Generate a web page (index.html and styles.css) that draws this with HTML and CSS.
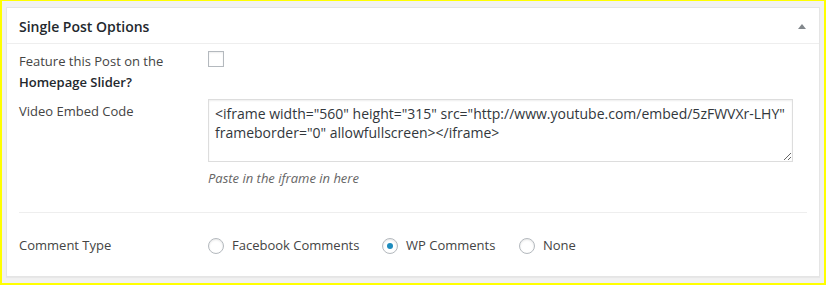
FILE: index.html
```html
<!DOCTYPE html>
<html>
<head>
<meta charset="utf-8">
<link rel="stylesheet" href="styles.css">
</head>
<body>
<div class="frame">
  <div class="postbox">
    <div class="postbox-header">
      <h2 class="postbox-title">Single Post Options</h2>
      <span class="toggle-arrow"></span>
    </div>
    <div class="postbox-inside">
      <div class="field-row row-feature">
        <div class="field-label">Feature this Post on the <strong>Homepage Slider?</strong></div>
        <div class="field-control">
          <input type="checkbox" class="wp-check">
        </div>
      </div>
      <div class="field-row row-video">
        <div class="field-label">Video Embed Code</div>
        <div class="field-control">
          <textarea class="embed-area" rows="3">&lt;iframe width="560" height="315" src="http://www.youtube.com/embed/5zFWVXr-LHY" frameborder="0" allowfullscreen&gt;&lt;/iframe&gt;</textarea>
          <p class="description">Paste in the iframe in here</p>
        </div>
      </div>
      <hr class="separator">
      <div class="field-row row-comment">
        <div class="field-label">Comment Type</div>
        <div class="field-control radio-group">
          <label class="radio-opt"><input type="radio" name="ct" class="wp-radio"> Facebook Comments</label>
          <label class="radio-opt"><input type="radio" name="ct" class="wp-radio" checked> WP Comments</label>
          <label class="radio-opt"><input type="radio" name="ct" class="wp-radio"> None</label>
        </div>
      </div>
    </div>
  </div>
</div>
</body>
</html>
```

FILE: styles.css
```css
* { box-sizing: border-box; }
html, body { margin: 0; padding: 0; }
body {
  font-family: "Open Sans", "Liberation Sans", sans-serif;
  font-size: 13px;
  color: #444;
}
.frame {
  width: 826px;
  height: 285px;
  border: 2px solid #ffff00;
  border-top-width: 1px;
  background: #f1f1f1;
  padding: 6px 4px 0 4px;
}
.postbox {
  background: #fff;
  border: 1px solid #e5e5e5;
  box-shadow: 0 1px 1px rgba(0,0,0,0.04);
  height: 270px;
}
.postbox-header {
  height: 36px;
  border-bottom: 1px solid #eee;
  display: flex;
  align-items: center;
  justify-content: space-between;
  padding: 3px 12px 0 12px;
}
.postbox-title {
  margin: 0;
  font-size: 14px;
  font-weight: 600;
  color: #23282d;
  line-height: 1.4;
}
.toggle-arrow {
  width: 0;
  height: 0;
  border-left: 4px solid transparent;
  border-right: 4px solid transparent;
  border-bottom: 5px solid #82878c;
  margin-right: 1px;
  margin-bottom: 2px;
}
.postbox-inside {
  padding: 7px 12px 0 12px;
}
.field-row {
  display: flex;
  align-items: flex-start;
}
.field-label {
  width: 189px;
  flex: none;
  line-height: 21px;
  color: #444;
}
.field-label strong { font-weight: 600; color: #23282d; }
.field-control { flex: 1; }
.row-feature .field-control { padding-top: 0; }
.row-video { margin-top: 6px; }
.row-video .field-label { padding-top: 2px; }
.wp-check {
  -webkit-appearance: none;
  appearance: none;
  width: 16px;
  height: 16px;
  margin: 0;
  border: 1px solid #b4b9be;
  background: #fff;
  box-shadow: inset 0 1px 2px rgba(0,0,0,0.07);
  display: block;
}
.embed-area {
  display: block;
  width: 585px;
  height: 63px;
  margin: 0;
  padding: 4px 6px 2px 6px;
  border: 1px solid #ddd;
  box-shadow: inset 0 1px 2px rgba(0,0,0,0.07);
  font-family: "Open Sans", "Liberation Sans", sans-serif;
  font-size: 14px;
  line-height: 19px;
  color: #32373c;
  resize: both;
  outline: none;
}
.description {
  margin: 6px 0 0 0;
  font-style: italic;
  color: #666;
  line-height: 21px;
}
.separator {
  border: 0;
  border-top: 1px solid #eee;
  margin: 23px 0 0 0;
  height: 0;
}
.row-comment { margin-top: 22px; align-items: center; }
.radio-group {
  display: flex;
  align-items: center;
}
.radio-opt {
  display: flex;
  align-items: center;
  line-height: 21px;
  color: #444;
}
.radio-opt:nth-child(1) { width: 174px; }
.radio-opt:nth-child(2) { width: 137px; }
.wp-radio {
  -webkit-appearance: none;
  appearance: none;
  width: 16px;
  height: 16px;
  margin: 0 8px 0 0;
  border: 1px solid #b4b9be;
  border-radius: 50%;
  background: #fff;
  box-shadow: inset 0 1px 2px rgba(0,0,0,0.1);
  display: flex;
  align-items: center;
  justify-content: center;
}
.wp-radio:checked::before {
  content: "";
  width: 6px;
  height: 6px;
  border-radius: 50%;
  background: #1e8cbe;
}
```
